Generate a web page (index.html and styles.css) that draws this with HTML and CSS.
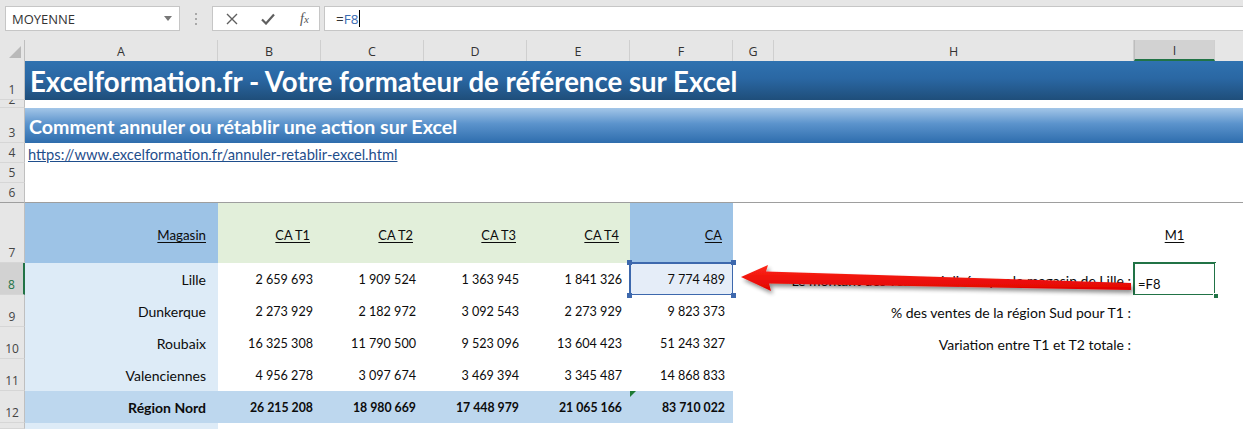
FILE: index.html
```html
<!DOCTYPE html>
<html lang="fr">
<head>
<meta charset="utf-8">
<title>Excel - annuler rétablir</title>
<link rel="stylesheet" href="styles.css">
</head>
<body>
<div class="fbar">
  <div class="namebox"><span>MOYENNE</span><svg class="dd" width="8" height="5" viewBox="0 0 8 5"><path d="M0 0 L8 0 L4 5 Z" fill="#777"/></svg></div>
  <div class="grip"><i></i><i></i><i></i></div>
  <div class="fbtns">
    <svg width="12" height="12" viewBox="0 0 12 12"><path d="M1 1 L11 11 M11 1 L1 11" stroke="#5f5f5f" stroke-width="1.4" fill="none"/></svg>
    <svg width="14" height="12" viewBox="0 0 14 12"><path d="M1 6.5 L5 10.5 L13 1.5" stroke="#5f5f5f" stroke-width="2.2" fill="none"/></svg>
    <span class="fx"><i>f</i><i class="sub">x</i></span>
  </div>
  <div class="finput">=<span class="ref">F8</span><span class="cursor"></span></div>
</div>

<div class="sheet">
  <!-- column headers -->
  <div class="corner"><svg width="14" height="14" viewBox="0 0 14 14"><path d="M13 1 L13 13 L1 13 Z" fill="#b9b9b9"/></svg></div>
  <div class="ch">A</div><div class="ch">B</div><div class="ch">C</div><div class="ch">D</div><div class="ch">E</div><div class="ch">F</div><div class="ch">G</div><div class="ch">H</div><div class="ch sel">I</div><div class="ch last"></div>

  <!-- row 1 -->
  <div class="rh">1</div>
  <div class="banner">Excelformation.fr - Votre formateur de référence sur Excel</div>
  <!-- row 2 -->
  <div class="rh r2"><span>2</span></div>
  <div class="blank"></div>
  <!-- row 3 -->
  <div class="rh">3</div>
  <div class="subbanner">Comment annuler ou rétablir une action sur Excel</div>
  <!-- row 4 -->
  <div class="rh">4</div>
  <div class="linkrow"><a class="link">https://www.excelformation.fr/annuler-retablir-excel.html</a></div>
  <!-- row 5 -->
  <div class="rh">5</div>
  <div class="blank"></div>
  <!-- row 6 -->
  <div class="rh r6">6</div>
  <div class="blank r6"></div>

  <!-- row 7 -->
  <div class="rh">7</div>
  <div class="c hdA"><u>Magasin</u></div>
  <div class="c hdG"><u>CA T1</u></div>
  <div class="c hdG"><u>CA T2</u></div>
  <div class="c hdG"><u>CA T3</u></div>
  <div class="c hdG"><u>CA T4</u></div>
  <div class="c hdF"><u>CA</u></div>
  <div class="c"></div>
  <div class="c"></div>
  <div class="c m1"><u>M1</u></div>
  <div class="c"></div>

  <!-- row 8 -->
  <div class="rh selr">8</div>
  <div class="c nm">Lille</div>
  <div class="c num">2 659 693</div>
  <div class="c num">1 909 524</div>
  <div class="c num">1 363 945</div>
  <div class="c num">1 841 326</div>
  <div class="c num refcell">7 774 489<span class="h tl"></span><span class="h tr"></span><span class="h bl"></span><span class="h br"></span></div>
  <div class="c"></div>
  <div class="c lbl">Le montant des ventes réalisées par le magasin de Lille :</div>
  <div class="c active">=F8<span class="fill"></span></div>
  <div class="c"></div>

  <!-- row 9 -->
  <div class="rh">9</div>
  <div class="c nm">Dunkerque</div>
  <div class="c num">2 273 929</div>
  <div class="c num">2 182 972</div>
  <div class="c num">3 092 543</div>
  <div class="c num">2 273 929</div>
  <div class="c num">9 823 373</div>
  <div class="c"></div>
  <div class="c lbl">% des ventes de la région Sud pour T1 :</div>
  <div class="c"></div>
  <div class="c"></div>

  <!-- row 10 -->
  <div class="rh">10</div>
  <div class="c nm">Roubaix</div>
  <div class="c num">16 325 308</div>
  <div class="c num">11 790 500</div>
  <div class="c num">9 523 096</div>
  <div class="c num">13 604 423</div>
  <div class="c num">51 243 327</div>
  <div class="c"></div>
  <div class="c lbl">Variation entre T1 et T2 totale :</div>
  <div class="c"></div>
  <div class="c"></div>

  <!-- row 11 -->
  <div class="rh">11</div>
  <div class="c nm">Valenciennes</div>
  <div class="c num">4 956 278</div>
  <div class="c num">3 097 674</div>
  <div class="c num">3 469 394</div>
  <div class="c num">3 345 487</div>
  <div class="c num">14 868 833</div>
  <div class="c"></div>
  <div class="c"></div>
  <div class="c"></div>
  <div class="c"></div>

  <!-- row 12 -->
  <div class="rh">12</div>
  <div class="c tot">Région Nord</div>
  <div class="c tot num">26 215 208</div>
  <div class="c tot num">18 980 669</div>
  <div class="c tot num">17 448 979</div>
  <div class="c tot num">21 065 166</div>
  <div class="c tot num warn">83 710 022</div>
  <div class="c"></div>
  <div class="c"></div>
  <div class="c"></div>
  <div class="c"></div>

  <!-- row 13 (partially visible) -->
  <div class="rh"></div>
  <div class="c nm"></div>
  <div class="c"></div><div class="c"></div><div class="c"></div><div class="c"></div><div class="c"></div><div class="c"></div><div class="c"></div><div class="c"></div><div class="c"></div>
</div>

<svg class="arrow" width="1243" height="429" viewBox="0 0 1243 429">
  <defs>
    <filter id="sh" x="-5%" y="-50%" width="110%" height="200%">
      <feGaussianBlur in="SourceAlpha" stdDeviation="2"/>
      <feOffset dx="2" dy="3" result="b"/>
      <feComponentTransfer><feFuncA type="linear" slope="0.45"/></feComponentTransfer>
      <feMerge><feMergeNode/><feMergeNode in="SourceGraphic"/></feMerge>
    </filter>
    <linearGradient id="rg" x1="0" y1="0" x2="0" y2="1">
      <stop offset="0" stop-color="#ff2a1a"/>
      <stop offset="1" stop-color="#e00000"/>
    </linearGradient>
  </defs>
  <path d="M741 277 L768 265 L766 271.5 L1131 283 L1131 290 L769 283.5 L771 291 Z" fill="url(#rg)" filter="url(#sh)"/>
</svg>
</body>
</html>
```

FILE: styles.css
```css
* { box-sizing: border-box; }

body {
  margin: 0;
  width: 1243px;
  height: 429px;
  overflow: hidden;
  background: #e6e6e6;
  font-family: "Open Sans", "Noto Sans", sans-serif;
  position: relative;
}

/* ---------- formula bar ---------- */
.fbar {
  height: 40px;
  display: flex;
  align-items: flex-start;
  padding-top: 6px;
}

.namebox {
  margin-left: 5px;
  width: 175px;
  height: 25px;
  background: #fff;
  border: 1px solid #c6c6c6;
  display: flex;
  align-items: center;
  justify-content: space-between;
  padding: 0 7px 0 6px;
  font-size: 13px;
  color: #333;
}

.grip {
  width: 32px;
  height: 25px;
  display: flex;
  flex-direction: column;
  align-items: center;
  justify-content: center;
  gap: 3px;
}
.grip i {
  display: block;
  width: 2px;
  height: 2px;
  background: #a8a8a8;
}

.fbtns {
  width: 108px;
  height: 25px;
  background: #fff;
  border: 1px solid #c6c6c6;
  display: flex;
  align-items: center;
  padding-left: 13px;
  gap: 23px;
}
.fx {
  font-family: "Liberation Serif", serif;
  font-size: 14px;
  color: #555;
  margin-left: 2px;
}
.fx .sub { font-size: 11px; }

.finput {
  margin-left: 4px;
  flex: 1;
  height: 25px;
  background: #fff;
  border: 1px solid #c6c6c6;
  border-right: none;
  padding-left: 11px;
  font-size: 13.5px;
  color: #333;
  display: flex;
  align-items: center;
}
.finput .ref { color: #3b6cb2; }
.finput .cursor {
  display: inline-block;
  width: 1px;
  height: 17px;
  background: #000;
  margin-left: 1px;
}

/* ---------- sheet ---------- */
.sheet {
  display: grid;
  grid-template-columns: 25px 193px 103px 103px 103px 103px 103px 41px 360px 81px 1fr;
  grid-template-rows: 21px 39px 8px 35px 20px 20px 20px 60px 32px 32px 32px 32px 32px 6px;
  background: #fff;
  font-family: "Lato", "Open Sans", sans-serif;
  font-size: 14px;
  color: #0c0c0c;
}

.corner {
  background: #e6e6e6;
  border-right: 1px solid #bfbfbf;
  display: flex;
  align-items: flex-end;
  justify-content: flex-end;
  padding: 0 2px 2px 0;
}

.ch {
  background: #e6e6e6;
  border-right: 1px solid #cfcfcf;
  display: flex;
  align-items: center;
  justify-content: center;
  font-family: "Open Sans", sans-serif;
  font-size: 12.5px;
  color: #333;
  padding-top: 1px;
}
.ch.sel {
  background: #d2d2d2;
  border-bottom: 2px solid #217346;
  border-left: 1px solid #bdbdbd;
  color: #333;
}
.ch.last { border-right: none; }

.rh {
  grid-column: 1;
  background: #e6e6e6;
  border-right: 1px solid #bfbfbf;
  border-bottom: 1px solid #d6d6d6;
  display: flex;
  align-items: flex-end;
  justify-content: center;
  overflow: hidden;
  font-family: "Open Sans", sans-serif;
  font-size: 12px;
  line-height: 14px;
  color: #444;
  padding-bottom: 2px;
}
.rh.r2 {
  padding-bottom: 0;
  align-items: flex-start;
}
.rh.r2 span {
  display: block;
  margin-top: -7px;
  line-height: 14px;
}
.rh.selr {
  background: #d2d2d2;
  border-right: 2px solid #217346;
  color: #217346;
}
.r6 { border-bottom: 1px solid #9e9e9e; }

.banner {
  grid-column: 2 / -1;
  background: linear-gradient(#2f72b0, #2a67a3 45%, #1f4e7a);
  color: #fff;
  font-family: "Lato", "Open Sans", sans-serif;
  font-weight: 700;
  font-size: 27.6px;
  display: flex;
  align-items: center;
  padding-left: 5px;
  padding-top: 1px;
  white-space: nowrap;
}

.subbanner {
  grid-column: 2 / -1;
  background: linear-gradient(#a3c6e8, #5b93cc 45%, #2e6dad);
  color: #fff;
  font-family: "Lato", "Open Sans", sans-serif;
  font-weight: 700;
  font-size: 19.6px;
  display: flex;
  align-items: center;
  padding-left: 4px;
  padding-top: 2px;
  white-space: nowrap;
}

.blank { grid-column: 2 / -1; background: #fff; }

.linkrow {
  grid-column: 2 / -1;
  display: flex;
  align-items: flex-end;
  padding-left: 3px;
  padding-bottom: 0;
}
.link {
  color: #1f4e8c;
  text-decoration: underline;
  font-size: 14.7px;
  line-height: 18px;
  white-space: nowrap;
}

.c {
  display: flex;
  align-items: center;
  justify-content: flex-end;
  white-space: nowrap;
  padding-right: 8px;
  position: relative;
  background: #fff;
}
.c u { text-decoration-thickness: 1px; text-underline-offset: 2px; }

.hdA { background: #9dc3e6; padding-right: 12px; padding-top: 4px; font-size: 13.3px; }
.hdG { background: #e2efda; padding-right: 11px; padding-top: 4px; font-size: 12.8px; }
.hdF { background: #9dc3e6; padding-right: 11px; padding-top: 4px; font-size: 12.8px; }
.m1 { justify-content: center; padding-right: 0; padding-top: 4px; font-size: 13px; }

.nm { background: #ddebf7; padding-right: 12px; }
.num { padding-right: 8px; font-size: 12.6px; }
.tot { background: #bdd7ee; font-weight: 700; padding-right: 12px; }
.tot.num { padding-right: 8px; font-size: 12.3px; }

.lbl { padding-right: 3px; padding-top: 2px; }

.warn::before {
  content: "";
  position: absolute;
  left: 0;
  top: 0;
  border-top: 6px solid #1e7b34;
  border-right: 6px solid transparent;
}

.refcell { background: #e5edf8; }
.refcell::after {
  content: "";
  position: absolute;
  left: -1px;
  top: -1px;
  right: -1px;
  bottom: -1px;
  border: 2px solid #3d68ad;
}
.refcell .h {
  position: absolute;
  width: 5px;
  height: 5px;
  background: #3d68ad;
  z-index: 2;
}
.refcell .tl { left: -3px; top: -3px; }
.refcell .tr { right: -3px; top: -3px; }
.refcell .bl { left: -3px; bottom: -3px; }
.refcell .br { right: -3px; bottom: -3px; }

.active {
  justify-content: flex-start;
  align-items: flex-end;
  padding: 0 0 3px 4px;
  font-size: 13px;
}
.active::after {
  content: "";
  position: absolute;
  left: -1px;
  top: -1px;
  right: -1px;
  bottom: -1px;
  border: 2px solid #217346;
}
.active .fill {
  position: absolute;
  right: -4px;
  bottom: -4px;
  width: 6px;
  height: 6px;
  background: #217346;
  border: 1px solid #fff;
  z-index: 2;
}

.arrow {
  position: absolute;
  left: 0;
  top: 0;
  pointer-events: none;
}
```
